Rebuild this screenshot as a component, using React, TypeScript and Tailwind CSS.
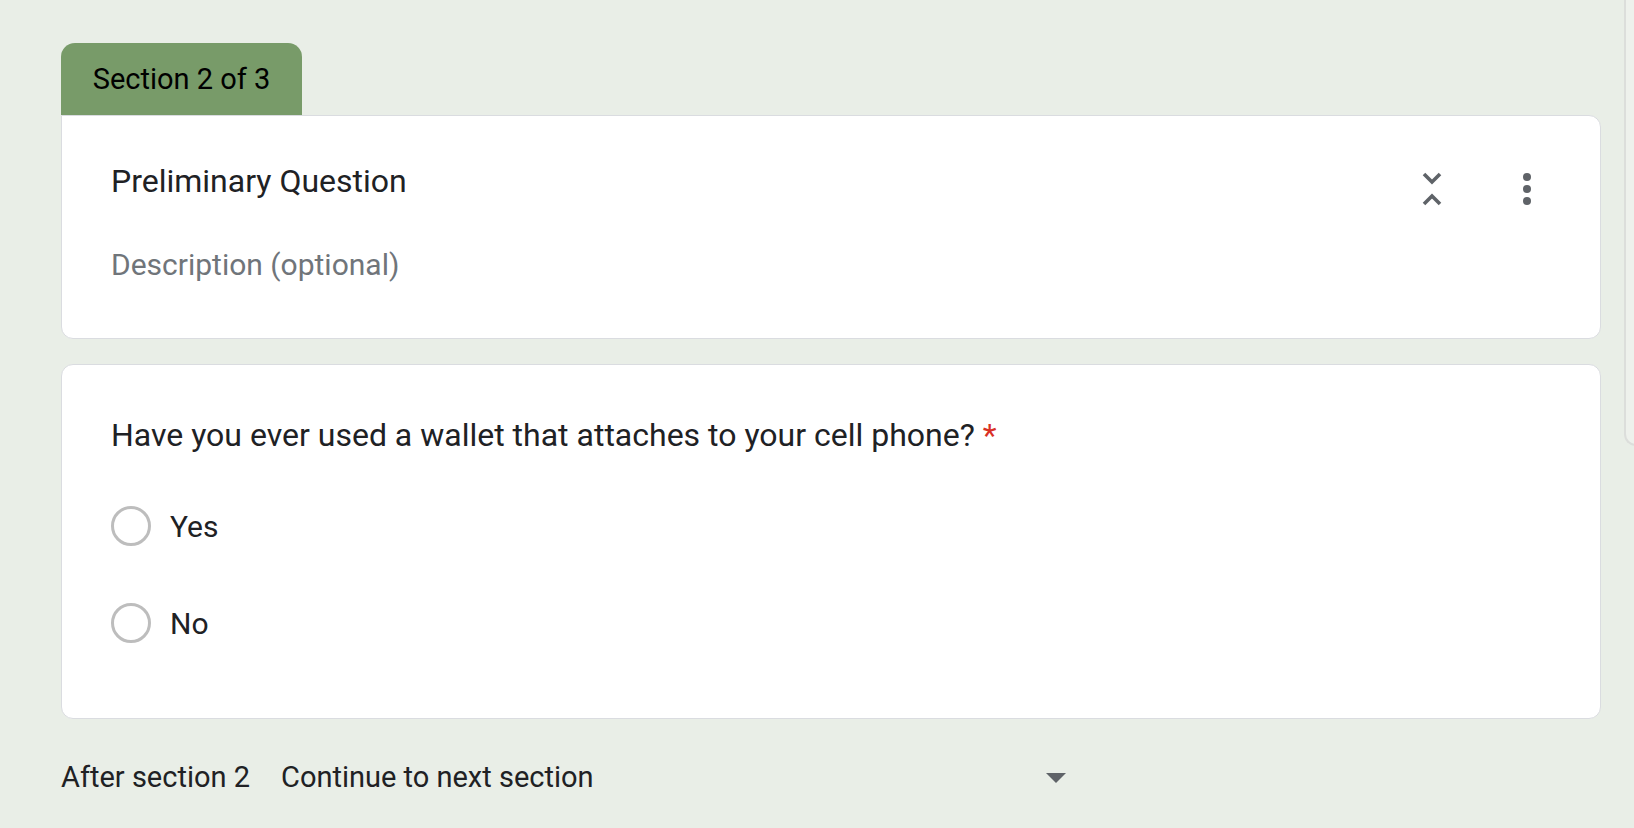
export default function App() {
  return (
    <div
      className="min-h-[828px] w-full bg-[#e9eee7] overflow-hidden flex"
      style={{ fontFamily: "Roboto, 'Liberation Sans', sans-serif" }}
    >
      <div className="flex flex-col pl-[61px] pt-[43px] w-[1601px] shrink-0">
        <div className="w-[241px] h-[72px] bg-[#789b69] rounded-t-[14px] flex items-center justify-center pt-[2px]">
          <span className="text-[29px] text-black">Section 2 of 3</span>
        </div>

        <div className="h-[224px] bg-white border border-[#dadce0] rounded-b-[12px] rounded-tr-[12px] pl-[49px] pr-[69px] pt-[40px] flex">
          <div className="flex-1 flex flex-col">
            <div className="text-[32px] text-[#202124] leading-[50px]">Preliminary Question</div>
            <div className="text-[30px] text-[#70757a] mt-[34px] leading-[50px]">Description (optional)</div>
          </div>
          <div className="flex items-start gap-[80px] pt-[15px]">
            <svg width="22" height="36" viewBox="0 0 22 36" className="text-[#5f6368]">
              <path d="M3 3 L11 11 L19 3" fill="none" stroke="currentColor" strokeWidth="3.6" />
              <path d="M3 33 L11 25 L19 33" fill="none" stroke="currentColor" strokeWidth="3.6" />
            </svg>
            <div className="flex flex-col gap-[4px] pt-[2px]">
              <span className="w-[8px] h-[8px] rounded-full bg-[#5f6368]" />
              <span className="w-[8px] h-[8px] rounded-full bg-[#5f6368]" />
              <span className="w-[8px] h-[8px] rounded-full bg-[#5f6368]" />
            </div>
          </div>
        </div>

        <div className="mt-[25px] h-[355px] bg-white border border-[#dadce0] rounded-[12px] pl-[49px] pt-[45px] flex flex-col">
          <div className="text-[32px] text-[#202124] leading-[50px]">
            Have you ever used a wallet that attaches to your cell phone?{" "}
            <span className="text-[#d93025]">*</span>
          </div>
          <div className="mt-[46px] flex flex-col gap-[57px]">
            {["Yes", "No"].map((o) => (
              <div key={o} className="flex items-center gap-[19px] h-[40px]">
                <span className="w-[40px] h-[40px] rounded-full border-[3px] border-[#bdbdbd]" />
                <span className="text-[30px] text-[#202124]">{o}</span>
              </div>
            ))}
          </div>
        </div>

        <div className="mt-[39px] flex items-center h-[40px] text-[29px] text-[#202124]">
          <span className="w-[220px]">After section 2</span>
          <span className="w-[765px]">Continue to next section</span>
          <svg width="20" height="10" viewBox="0 0 20 10">
            <path d="M0 0 L20 0 L10 10 Z" fill="#5f6368" />
          </svg>
        </div>
      </div>

      <div className="ml-[23px] mt-[-10px] w-[40px] h-[456px] shrink-0 bg-[#eef1ec] border-l-2 border-b-2 border-[#dcdedb] rounded-bl-[12px]" />
    </div>
  );
}
